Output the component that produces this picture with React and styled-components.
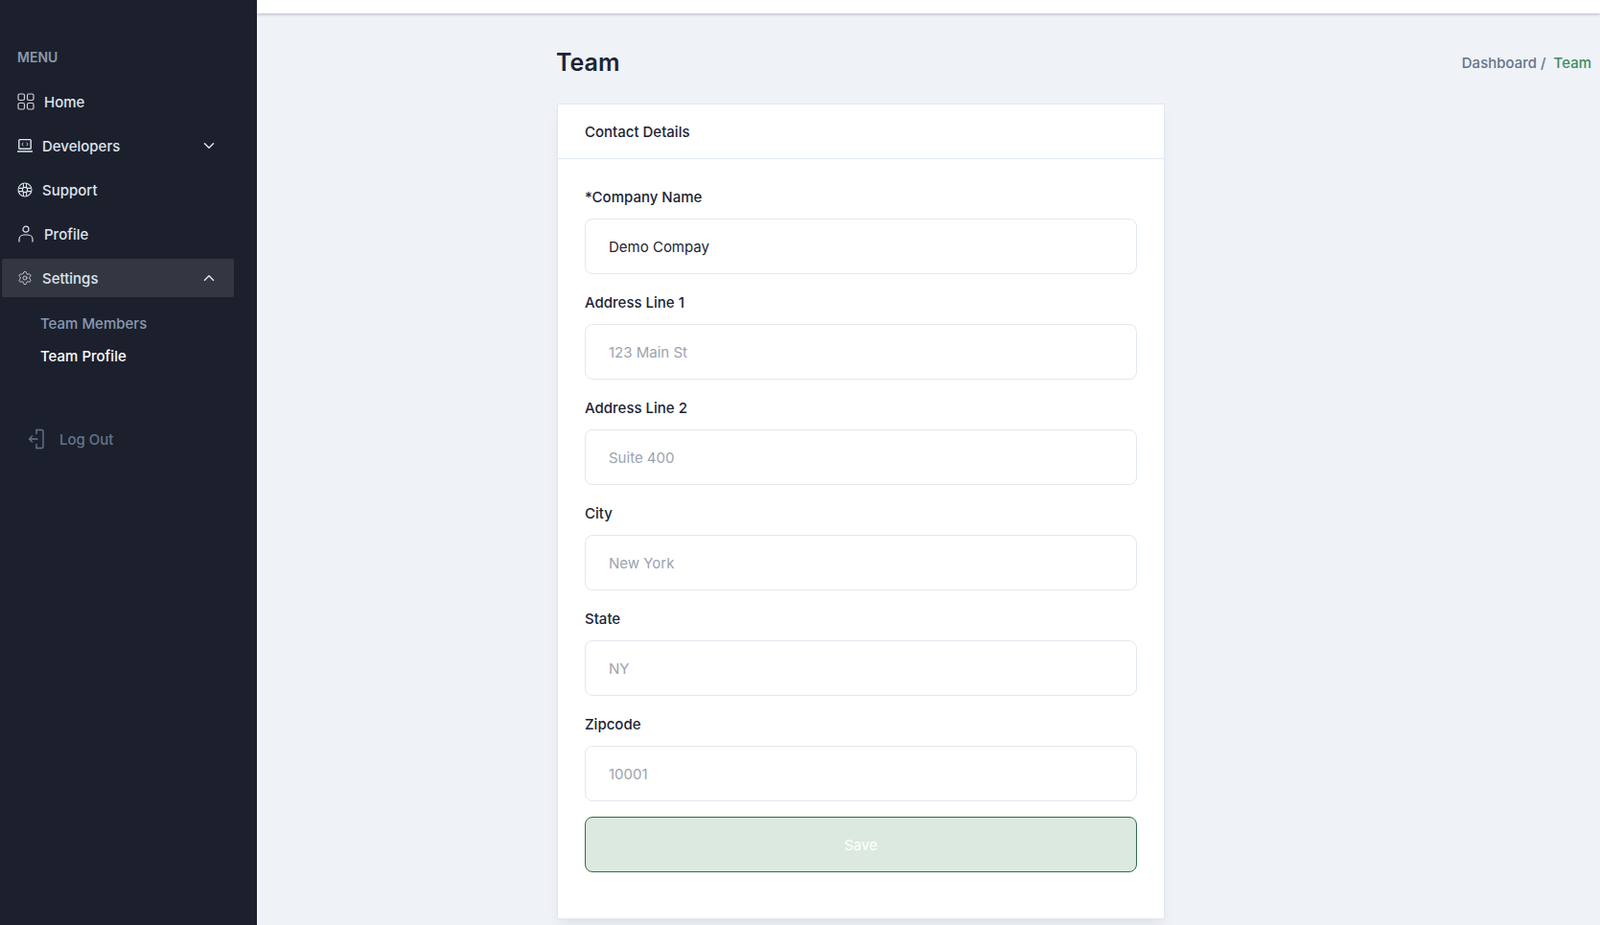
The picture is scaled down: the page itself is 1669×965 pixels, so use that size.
import React from "react";
import styled, { createGlobalStyle } from "styled-components";
import { ChevronDown, ChevronUp, Settings } from "lucide-react";

const GlobalStyle = createGlobalStyle`
  html, body {
    margin: 0;
    padding: 0;
    height: 100%;
    overflow: hidden;
    background: #eff2f7;
    font-family: "Inter", "Liberation Sans", sans-serif;
  }
  * { box-sizing: border-box; }
`;

const Page = styled.div`
  display: flex;
  height: 965px;
`;

const Sidebar = styled.aside`
  width: 268px;
  flex-shrink: 0;
  background: #1c202d;
  padding: 50px 2px 0;
`;

const MenuTitle = styled.h3`
  margin: 0 0 16px 16px;
  font-size: 14px;
  line-height: 20px;
  font-weight: 600;
  color: #8a99af;
`;

const NavItem = styled.div`
  display: flex;
  align-items: center;
  width: 242px;
  height: 40px;
  margin-bottom: 6px;
  padding: 0 17px 0 16px;
  gap: 10px;
  border-radius: 2px;
  background: ${(p) => (p.$active ? "#333741" : "transparent")};
  color: #dee4ee;
  font-size: 15px;
  font-weight: 500;
  svg { flex-shrink: 0; }
`;

const NavLabel = styled.span`
  flex: 1;
`;

const SubMenu = styled.div`
  display: flex;
  flex-direction: column;
  gap: 10px;
  margin: 16px 0 0 40px;
`;

const SubItem = styled.div`
  font-size: 15px;
  line-height: 24px;
  font-weight: 500;
  color: ${(p) => (p.$active ? "#ffffff" : "#8a99af")};
`;

const LogOut = styled.div`
  display: flex;
  align-items: center;
  gap: 15px;
  margin: 63px 0 0 27px;
  font-size: 15px;
  font-weight: 500;
  color: #64748b;
`;

const Main = styled.main`
  flex: 1;
  min-width: 0;
`;

const TopBar = styled.header`
  height: 14px;
  background: #ffffff;
  box-shadow: 0 1px 3px rgba(60, 70, 90, 0.35);
`;

const PageHead = styled.div`
  display: flex;
  align-items: center;
  justify-content: space-between;
  padding: 0 9px 22px 312px;
  height: 94px;
  padding-top: 30px;
`;

const Title = styled.h2`
  margin: 0;
  font-size: 25px;
  line-height: 30px;
  font-weight: 600;
  color: #1c2434;
`;

const Crumbs = styled.div`
  display: flex;
  gap: 8px;
  font-size: 15px;
  font-weight: 500;
  color: #64748b;
`;

const CrumbActive = styled.span`
  color: #3c8c5f;
`;

const Card = styled.section`
  width: 634px;
  margin-left: 313px;
  background: #ffffff;
  border: 1px solid #e2e8f0;
  box-shadow: 0 8px 13px -3px rgba(0, 0, 0, 0.07);
`;

const CardHead = styled.div`
  height: 57px;
  display: flex;
  align-items: center;
  padding: 0 28px;
  border-bottom: 1px solid #e2e8f0;
  font-size: 15px;
  font-weight: 500;
  color: #1c2434;
`;

const Form = styled.form`
  padding: 28px 28px 48px;
`;

const Field = styled.div`
  margin-bottom: 18px;
`;

const Label = styled.label`
  display: block;
  margin-bottom: 10px;
  font-size: 15px;
  line-height: 24px;
  font-weight: 500;
  color: #1c2434;
`;

const Input = styled.input`
  display: block;
  width: 100%;
  height: 58px;
  padding: 0 24px;
  background: #ffffff;
  border: 1px solid #e2e8f0;
  border-radius: 8px;
  outline: none;
  font-family: inherit;
  font-size: 15px;
  color: #1c2434;
  &::placeholder { color: #9ca3af; opacity: 1; }
`;

const SaveButton = styled.button`
  display: block;
  width: 100%;
  height: 58px;
  margin-top: -2px;
  background: #dce9df;
  border: 1px solid #2f6b4a;
  border-radius: 8px;
  font-family: inherit;
  font-size: 15px;
  font-weight: 400;
  color: #ffffff;
`;

const HomeIcon = () => (
  <svg width="18" height="18" viewBox="0 0 18 18" fill="none" stroke="#c9ced8" strokeWidth="1.2">
    <rect x="1" y="1" width="6.5" height="6.5" rx="1.4" />
    <rect x="10.500" y="1" width="6.5" height="6.5" rx="1.4" />
    <rect x="1" y="10.500" width="6.5" height="6.5" rx="1.4" />
    <rect x="10.500" y="10.500" width="6.5" height="6.5" rx="1.4" />
  </svg>
);

const LaptopIcon = () => (
  <svg width="16" height="16" viewBox="0 0 16 16" fill="none" stroke="#dee4ee" strokeWidth="1.2">
    <rect x="1.8" y="1.6" width="12.4" height="9.6" rx="0.8" strokeWidth="1.4" />
    <path d="M0.5 14h15" strokeWidth="1.6" strokeLinecap="round" />
    <path d="M6.4 5l-1.6 1.5 1.6 1.5M9.6 5l1.6 1.5-1.6 1.5" strokeWidth="1" />
  </svg>
);

const SupportIcon = () => (
  <svg width="16" height="16" viewBox="0 0 16 16" fill="none" stroke="#dee4ee" strokeWidth="1.1">
    <circle cx="8" cy="8" r="7" />
    <circle cx="8" cy="8" r="2.600" />
    <path d="M6.4 1.300v4.700M9.6 1.300v4.700M6.4 10v4.700M9.6 10v4.700M1.300 6.400h4.700M1.300 9.600h4.700M10 6.400h4.700M10 9.600h4.700" />
  </svg>
);

const PersonIcon = () => (
  <svg width="18" height="18" viewBox="0 0 18 18" fill="none" stroke="#dee4ee" strokeWidth="1.2" strokeLinecap="round">
    <circle cx="9" cy="4.2" r="3" />
    <path d="M2 17v-2.2C2 12 4.200 10 7 10h4c2.800 0 5 2 5 4.800V17" />
  </svg>
);

const LogOutIcon = () => (
  <svg width="18" height="22" viewBox="0 0 18 22" fill="none" stroke="#64748b" strokeWidth="1.4" strokeLinecap="round" strokeLinejoin="round">
    <path d="M9 1.500h5.500a1.500 1.500 0 0 1 1.500 1.500v16a1.500 1.500 0 0 1-1.500 1.500H9" />
    <path d="M10 11H1.500M4.500 8l-3 3 3 3" />
    <path d="M9 1.500v4M9 16.500v4" />
  </svg>
);

const fields = [
  { label: "*Company Name", value: "Demo Compay" },
  { label: "Address Line 1", placeholder: "123 Main St" },
  { label: "Address Line 2", placeholder: "Suite 400" },
  { label: "City", placeholder: "New York" },
  { label: "State", placeholder: "NY" },
  { label: "Zipcode", placeholder: "10001" },
];

export default function App() {
  return (
    <>
      <GlobalStyle />
      <Page>
        <Sidebar>
          <MenuTitle>MENU</MenuTitle>
          <NavItem>
            <HomeIcon />
            <NavLabel>Home</NavLabel>
          </NavItem>
          <NavItem>
            <LaptopIcon />
            <NavLabel>Developers</NavLabel>
            <ChevronDown size={18} color="#dee4ee" />
          </NavItem>
          <NavItem>
            <SupportIcon />
            <NavLabel>Support</NavLabel>
          </NavItem>
          <NavItem>
            <PersonIcon />
            <NavLabel>Profile</NavLabel>
          </NavItem>
          <NavItem $active>
            <Settings size={16} color="#dee4ee" strokeWidth={1.2} />
            <NavLabel>Settings</NavLabel>
            <ChevronUp size={18} color="#dee4ee" />
          </NavItem>
          <SubMenu>
            <SubItem>Team Members</SubItem>
            <SubItem $active>Team Profile</SubItem>
          </SubMenu>
          <LogOut>
            <LogOutIcon />
            Log Out
          </LogOut>
        </Sidebar>
        <Main>
          <TopBar />
          <PageHead>
            <Title>Team</Title>
            <Crumbs>
              <span>Dashboard /</span>
              <CrumbActive>Team</CrumbActive>
            </Crumbs>
          </PageHead>
          <Card>
            <CardHead>Contact Details</CardHead>
            <Form>
              {fields.map((f) => (
                <Field key={f.label}>
                  <Label>{f.label}</Label>
                  <Input defaultValue={f.value} placeholder={f.placeholder} />
                </Field>
              ))}
              <SaveButton type="button">Save</SaveButton>
            </Form>
          </Card>
        </Main>
      </Page>
    </>
  );
}
